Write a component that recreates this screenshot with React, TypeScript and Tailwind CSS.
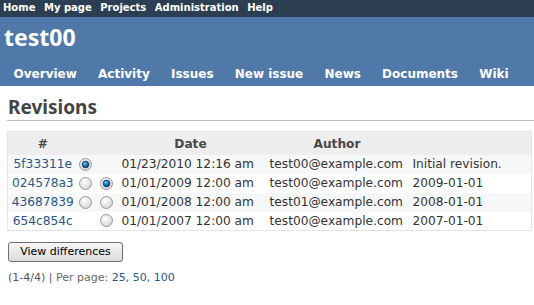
import React from "react";

function Radio({ checked }: { checked?: boolean }) {
  return (
    <svg width="13" height="13" viewBox="0 0 13 13" className="block">
      <defs>
        <radialGradient id="rbg" cx="40%" cy="35%" r="70%">
          <stop offset="0%" stopColor="#ffffff" />
          <stop offset="100%" stopColor="#d4d4d4" />
        </radialGradient>
        <radialGradient id="rdot" cx="40%" cy="35%" r="65%">
          <stop offset="0%" stopColor="#7cc4f2" />
          <stop offset="55%" stopColor="#1a74b8" />
          <stop offset="100%" stopColor="#0a3f6e" />
        </radialGradient>
      </defs>
      <circle cx="6.5" cy="6.5" r="6" fill="url(#rbg)" stroke="#9a9a9a" strokeWidth="1" />
      {checked && <circle cx="6.5" cy="6.5" r="3.4" fill="url(#rdot)" stroke="#1f3f5f" strokeWidth="0.8" />}
    </svg>
  );
}

const rows = [
  { id: "5f33311e", r1: true, r1show: true, r2: false, r2show: false, date: "01/23/2010 12:16 am", author: "test00@example.com", comment: "Initial revision." },
  { id: "024578a3", r1: false, r1show: true, r2: true, r2show: true, date: "01/01/2009 12:00 am", author: "test00@example.com", comment: "2009-01-01" },
  { id: "43687839", r1: false, r1show: true, r2: false, r2show: true, date: "01/01/2008 12:00 am", author: "test01@example.com", comment: "2008-01-01" },
  { id: "654c854c", r1: false, r1show: false, r2: false, r2show: true, date: "01/01/2007 12:00 am", author: "test00@example.com", comment: "2007-01-01" },
];

export default function App() {
  const font = { fontFamily: '"DejaVu Sans", Verdana, sans-serif' } as React.CSSProperties;
  return (
    <div className="w-[534px] h-[305px] bg-white overflow-hidden" style={font}>
      {/* top menu */}
      <div className="h-[17px] bg-[#2c3e52] flex items-center pl-[3px] gap-[8.5px] text-[10px] font-bold text-white leading-none pb-[1px]">
        <span>Home</span>
        <span>My page</span>
        <span>Projects</span>
        <span>Administration</span>
        <span>Help</span>
      </div>
      {/* header */}
      <div className="h-[69px] bg-[#5079a9] flex flex-col">
        <div
          className="pl-[4px] pt-[5px] h-[46px] text-[23px] font-bold text-white leading-[30px]"
          style={{ fontFamily: '"Noto Sans", "Open Sans", sans-serif' }}
        >
          test00
        </div>
        <div className="flex pl-[3px] text-[12px] font-bold text-white leading-none pt-[5px]">
          {["Overview", "Activity", "Issues", "New issue", "News", "Documents", "Wiki"].map((t) => (
            <span key={t} className="px-[10.6px]">
              {t}
            </span>
          ))}
        </div>
      </div>
      {/* content */}
      <div className="pl-[7px]">
        <div
          className="pt-[8px] pl-[1px] h-[35px] border-b border-[#bbbbbb] text-[19px] font-bold text-[#444444] leading-[26px]"
          style={{ fontFamily: '"Noto Sans", "Open Sans", sans-serif' }}
        >
          Revisions
        </div>
        <div className="mr-[2px] mt-[10px]">
          <table className="w-full table-fixed border-collapse border border-[#e4e4e4] text-[12.2px] text-[#333333]">
            <colgroup>
              <col className="w-[70px]" />
              <col className="w-[18px]" />
              <col className="w-[21px]" />
              <col className="w-[148px]" />
              <col className="w-[145px]" />
              <col />
            </colgroup>
            <thead>
              <tr className="h-[23px] bg-[#eeeeee] font-bold text-[#484848]">
                <th className="p-0 pt-[1px] text-center font-bold">#</th>
                <th className="p-0"></th>
                <th className="p-0"></th>
                <th className="p-0 pt-[1px] text-center font-bold">Date</th>
                <th className="p-0 pt-[1px] text-center font-bold">Author</th>
                <th className="p-0"></th>
              </tr>
            </thead>
            <tbody>
              {rows.map((r, i) => (
                <tr key={r.id} className={"h-[19px] " + (i % 2 === 0 ? "bg-[#f6f7f8]" : "bg-white")}>
                  <td className="p-0 text-center text-[#2a5685] whitespace-nowrap">{r.id}</td>
                  <td className="p-0">
                    <div className="pl-[1px]">{r.r1show && <Radio checked={r.r1} />}</div>
                  </td>
                  <td className="p-0">
                    <div className="pl-[4px]">{r.r2show && <Radio checked={r.r2} />}</div>
                  </td>
                  <td className="p-0 pl-[5px] whitespace-nowrap">{r.date}</td>
                  <td className="p-0 pl-[5px] whitespace-nowrap">{r.author}</td>
                  <td className="p-0 pl-[3px] whitespace-nowrap">{r.comment}</td>
                </tr>
              ))}
            </tbody>
          </table>
        </div>
        <div className="mt-[7px] pl-[1px]">
          <button
            className="w-[115px] h-[20px] rounded-[3px] border border-[#707070] bg-gradient-to-b from-[#f6f6f6] to-[#dcdcdc] text-[11px] text-black leading-none"
            style={font}
          >
            View differences
          </button>
        </div>
        <div className="mt-[10px] pl-[1px] text-[11px] leading-none">
          <span className="text-[#555555]">(1-4/4) </span>
          <span className="text-[#6a4a8a]">|</span>
          <span className="text-[#666666]"> Per page: </span>
          <span className="text-[#2a5685]">25, 50, 100</span>
        </div>
      </div>
    </div>
  );
}
